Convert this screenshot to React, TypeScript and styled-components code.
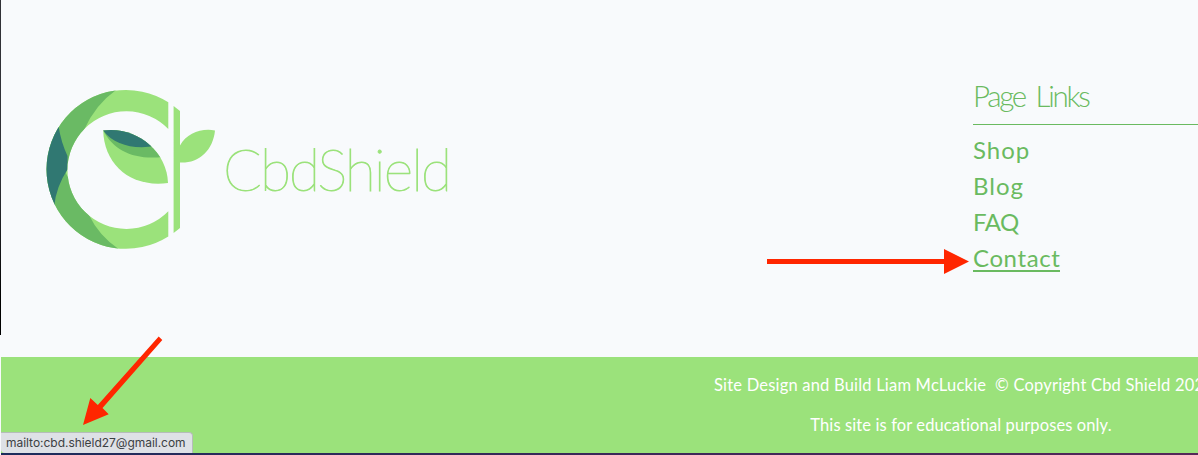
import React from "react";
import styled, { createGlobalStyle } from "styled-components";

const GlobalStyle = createGlobalStyle`
  * { box-sizing: border-box; }
  body { margin: 0; overflow: hidden; background: #f8fafc; }
`;

const Screen = styled.div`
  position: relative;
  width: 100%;
  height: 455px;
  overflow: hidden;
  display: flex;
  background: #f8fafc;
  font-family: Lato, "Open Sans", sans-serif;
`;

const WindowEdge = styled.div`
  flex: none;
  width: 1px;
  height: 335px;
  background: linear-gradient(#303136 0 180px, #000 300px);
`;

const Page = styled.div`
  flex: none;
  width: 1920px;
  display: flex;
  flex-direction: column;
`;

const Footer = styled.footer`
  height: 357px;
  display: flex;
  padding: 80px 45px 0;
`;

const Brand = styled.div`
  width: 927px;
  padding-top: 5px;
`;

const LogoDrawing = styled.svg`
  display: block;
  font-family: Lato, sans-serif;
  font-weight: 200;
`;

const LinksColumn = styled.nav`
  width: 480px;
`;

const LinksTitle = styled.h2`
  margin: 0 0 7px;
  height: 45px;
  border-bottom: 1px solid #6aba60;
  color: #6aba60;
  font-size: 29.5px;
  font-weight: 300;
  line-height: 32px;
  letter-spacing: -2.3px;
  word-spacing: 5px;
  white-space: nowrap;
`;

const LinkList = styled.ul`
  margin: 0;
  padding: 0;
  list-style: none;
`;

const LinkItem = styled.li`
  height: 36px;
  line-height: 36px;
  font-size: 24px;
`;

const PageLink = styled.a<{ $spacing: number; $active?: boolean }>`
  display: block;
  width: fit-content;
  height: 32px;
  color: #6aba60;
  text-decoration: none;
  letter-spacing: ${(p) => p.$spacing}px;
  border-bottom: ${(p) => (p.$active ? "2px solid #6aba60" : "0")};
`;

const Legal = styled.div`
  height: 96px;
  padding-top: 9px;
  background: #9be27b;
  color: #fff;
  text-align: center;
  font-size: 16.5px;
`;

const LegalLine = styled.p<{ $spacing: number; $indent?: number }>`
  margin: 0;
  padding-left: ${(p) => p.$indent ?? 0}px;
  height: 40px;
  line-height: 39px;
  white-space: pre;
  letter-spacing: ${(p) => p.$spacing}px;
`;

const DesktopStrip = styled.div`
  height: 2px;
  background: linear-gradient(90deg, #1c2c5c 0, #3a2858 600px, #552858 1198px);
`;

const StatusBubble = styled.div`
  position: absolute;
  left: 1px;
  bottom: 2px;
  width: 192px;
  height: 21px;
  padding-left: 5px;
  border: solid #b5bdb9;
  border-width: 1px 1px 0 0;
  border-radius: 0 4px 0 4px;
  background: #dee1e6;
  color: #3c4043;
  font: 12px/19px Inter, sans-serif;
  letter-spacing: -0.03px;
  white-space: nowrap;
`;

const Annotations = styled.svg`
  position: absolute;
  inset: 0;
  pointer-events: none;
`;

const links = [
  { label: "Shop", spacing: 1 },
  { label: "Blog", spacing: 1 },
  { label: "FAQ", spacing: -0.5 },
  { label: "Contact", spacing: 0.6, active: true },
];

function Logo() {
  return (
    <LogoDrawing width="410" height="170" viewBox="46 85 410 170" role="img" aria-label="CbdShield">
      <defs>
        <clipPath id="ring">
          <path
            clipRule="evenodd"
            d="M168.3 102.2A79.4 79.4 0 1 0 168.3 236.5V211.3A58.8 58.8 0 1 1 168.3 129Z"
          />
        </clipPath>
        <clipPath id="leaf">
          <path d="M103.2 130.5C135 126 167 150 168 183C130 188 104 164 103.2 130.5Z" />
        </clipPath>
      </defs>
      <g clipPath="url(#ring)">
        <path fill="#9be27b" d="M40 80H175V260H40Z" />
        <path fill="#6aba64" d="M119 88Q96 103 84 130L64 170L89 215Q99 236 120 250H40V88Z" />
        <path fill="#307872" d="M58.5 126Q61 142 67.5 156V169.5Q56 187 54.3 206L40 205V126Z" />
      </g>
      <g clipPath="url(#leaf)">
        <path fill="#9be27b" d="M100 125H170V190H100Z" />
        <path fill="#6aba64" d="M103.2 130.5C114 151 134 160 162.5 157L170 125H100Z" />
        <path fill="#307872" d="M103.2 130.5C114 145 133 149.5 155.5 146L165 125H100Z" />
      </g>
      <path
        fill="#9be27b"
        d="M173.6 106L180 111V145.6C187 133 201 128 215 130.4C213 151 198 163.5 180 162.5V228L173.6 233Z"
      />
      <text
        x="223"
        y="190.5"
        fontSize="57"
        fill="#9be27b"
        stroke="#9be27b"
        strokeWidth="0.9"
        textLength="229"
        lengthAdjust="spacing"
      >
        CbdShield
      </text>
    </LogoDrawing>
  );
}

export default function App() {
  return (
    <Screen>
      <GlobalStyle />
      <WindowEdge />
      <Page>
        <Footer>
          <Brand>
            <Logo />
          </Brand>
          <LinksColumn>
            <LinksTitle>Page Links</LinksTitle>
            <LinkList>
              {links.map((link) => (
                <LinkItem key={link.label}>
                  <PageLink $spacing={link.spacing} $active={link.active}>
                    {link.label}
                  </PageLink>
                </LinkItem>
              ))}
            </LinkList>
          </LinksColumn>
        </Footer>
        <Legal>
          <LegalLine $spacing={0.2} $indent={6}>
            {"Site Design and Build Liam McLuckie  © Copyright Cbd Shield 2021"}
          </LegalLine>
          <LegalLine $spacing={0.11}>This site is for educational purposes only.</LegalLine>
        </Legal>
        <DesktopStrip />
      </Page>
      <StatusBubble>mailto:cbd.shield27@gmail.com</StatusBubble>
      <Annotations width="1198" height="455" fill="#ff2600">
        <path d="M767 259H944V249L969 261.5L944 274V264H767Z" />
        <path d="M158.7 336.5L162.3 340L102.5 408L108.7 414.3L83 425L90.3 398L97.8 405Z" />
      </Annotations>
    </Screen>
  );
}
